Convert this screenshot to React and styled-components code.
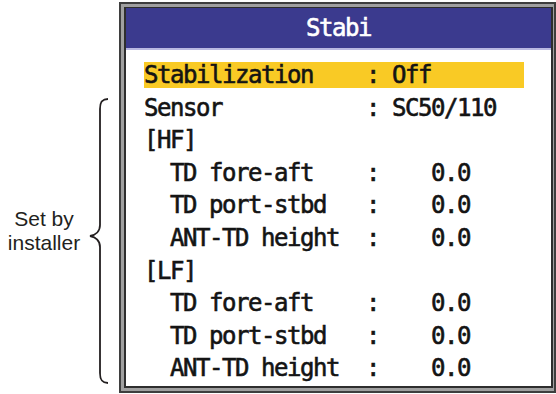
import React from 'react'
import styled, { createGlobalStyle } from 'styled-components'

const GlobalStyle = createGlobalStyle`
body{
    margin: 0;
    background: #fff;
}
`

const rows = [
    { label: 'Stabilization', value: 'Off', active: true },
    { label: 'Sensor', value: 'SC50/110' },
    { label: '[HF]' },
    { label: 'TD fore-aft', value: '0.0', sub: true, num: true },
    { label: 'TD port-stbd', value: '0.0', sub: true, num: true },
    { label: 'ANT-TD height', value: '0.0', sub: true, num: true },
    { label: '[LF]' },
    { label: 'TD fore-aft', value: '0.0', sub: true, num: true },
    { label: 'TD port-stbd', value: '0.0', sub: true, num: true },
    { label: 'ANT-TD height', value: '0.0', sub: true, num: true },
]

const App = () => {
    return (
        <Page>
            <GlobalStyle />
            <Note>
                <Caption>Set by<br />installer</Caption>
                <Brace width="22" height="288" viewBox="0 0 22 288">
                    <path
                        d="M20 2 C14 2 12 5 12 12 L12 128 C12 134 8 138 2 139 C8 140 12 144 12 150 L12 276 C12 283 14 286 20 286"
                        fill="none"
                        stroke="#231f20"
                        strokeWidth="1.8"
                    />
                </Brace>
            </Note>
            <Frame>
                <Inner>
                    <TitleBar>Stabi</TitleBar>
                    <Menu>
                        {rows.map((r, i) => (
                            <Row key={i} $active={r.active}>
                                <Label $sub={r.sub}>{r.label}</Label>
                                {r.value && <Colon>:</Colon>}
                                {r.value && <Value $num={r.num}>{r.value}</Value>}
                            </Row>
                        ))}
                    </Menu>
                </Inner>
            </Frame>
        </Page>
    )
}

const Page = styled.div`
display: flex;
width: 556px;
height: 394px;
overflow: hidden;
`

const Note = styled.div`
width: 119px;
flex: none;
display: flex;
align-items: flex-start;
padding-top: 97px;
box-sizing: border-box;
`

const Caption = styled.div`
width: 88px;
margin-top: 110px;
text-align: center;
font-family: "Liberation Sans", Arial, sans-serif;
font-size: 21px;
line-height: 24px;
color: #231f20;
`

const Brace = styled.svg`
display: block;
flex: none;
`

const Frame = styled.div`
margin-top: 2px;
width: 437px;
height: 391px;
box-sizing: border-box;
border: 2px solid #3e3e3e;
background: #a0a0a0;
padding: 3px 1px 3px 3px;
`

const Inner = styled.div`
height: 100%;
box-sizing: border-box;
border: 2px solid #2e2e2e;
border-top-width: 1px;
background: #fff;
display: flex;
flex-direction: column;
`

const mono = `
font-family: "DejaVu Sans Mono", "Liberation Mono", monospace;
font-weight: normal;
font-size: 24px;
letter-spacing: -1.45px;
-webkit-text-stroke: 0.6px currentColor;
`

const TitleBar = styled.div`
${mono}
height: 40px;
background: #3b3a8e;
border-bottom: 2px solid #b9b8e2;
color: #fff;
display: flex;
align-items: center;
justify-content: center;
`

const Menu = styled.div`
display: flex;
flex-direction: column;
gap: 6.6px;
padding: 12px 27px 0 18px;
`

const Row = styled.div`
${mono}
display: flex;
height: 26px;
line-height: 26px;
color: #141414;
background: ${p => p.$active ? '#f9ca25' : 'transparent'};
white-space: pre;
`

const Label = styled.div`
width: 221px;
flex: none;
box-sizing: border-box;
padding-left: ${p => p.$sub ? '26px' : '0'};
`

const Colon = styled.div`
width: 27px;
flex: none;
box-sizing: border-box;
padding-left: 1px;
`

const Value = styled.div`
padding-left: ${p => p.$num ? '39px' : '0'};
`

export default App
